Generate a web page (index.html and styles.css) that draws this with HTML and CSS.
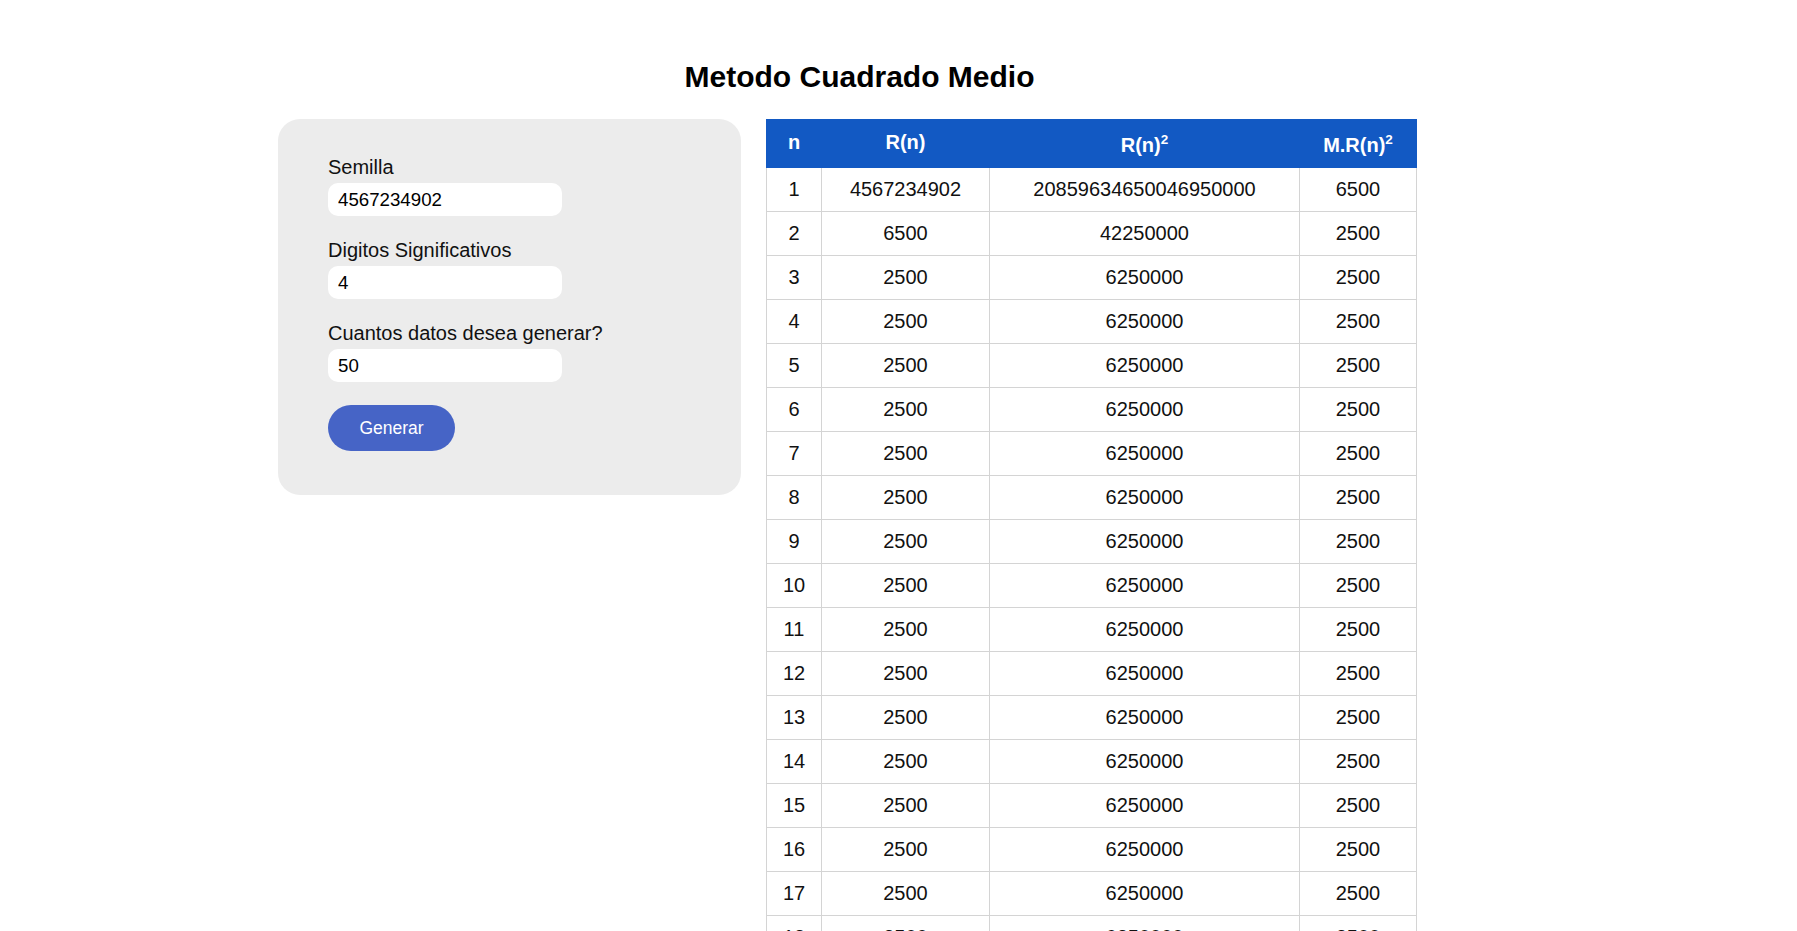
FILE: index.html
```html
<!DOCTYPE html>
<html lang="es">
<head>
<meta charset="utf-8">
<title>Metodo Cuadrado Medio</title>
<link rel="stylesheet" href="styles.css">
</head>
<body>
<div class="page">
  <h1 class="title">Metodo Cuadrado Medio</h1>
  <div class="layout">
    <form class="panel">
      <label class="label" for="semilla">Semilla</label>
      <input class="field" id="semilla" type="text" value="4567234902">
      <label class="label" for="digitos">Digitos Significativos</label>
      <input class="field" id="digitos" type="text" value="4">
      <label class="label" for="cuantos">Cuantos datos desea generar?</label>
      <input class="field" id="cuantos" type="text" value="50">
      <button class="btn" type="button">Generar</button>
    </form>
    <table class="results">
      <colgroup>
        <col class="c1"><col class="c2"><col class="c3"><col class="c4">
      </colgroup>
      <thead>
        <tr>
          <th class="plain">n</th>
          <th class="plain">R(n)</th>
          <th class="withsup">R(n)<sup class="sq">2</sup></th>
          <th class="withsup">M.R(n)<sup class="sq">2</sup></th>
        </tr>
      </thead>
      <tbody>
        <tr><td>1</td><td>4567234902</td><td>20859634650046950000</td><td>6500</td></tr>
        <tr><td>2</td><td>6500</td><td>42250000</td><td>2500</td></tr>
        <tr><td>3</td><td>2500</td><td>6250000</td><td>2500</td></tr>
        <tr><td>4</td><td>2500</td><td>6250000</td><td>2500</td></tr>
        <tr><td>5</td><td>2500</td><td>6250000</td><td>2500</td></tr>
        <tr><td>6</td><td>2500</td><td>6250000</td><td>2500</td></tr>
        <tr><td>7</td><td>2500</td><td>6250000</td><td>2500</td></tr>
        <tr><td>8</td><td>2500</td><td>6250000</td><td>2500</td></tr>
        <tr><td>9</td><td>2500</td><td>6250000</td><td>2500</td></tr>
        <tr><td>10</td><td>2500</td><td>6250000</td><td>2500</td></tr>
        <tr><td>11</td><td>2500</td><td>6250000</td><td>2500</td></tr>
        <tr><td>12</td><td>2500</td><td>6250000</td><td>2500</td></tr>
        <tr><td>13</td><td>2500</td><td>6250000</td><td>2500</td></tr>
        <tr><td>14</td><td>2500</td><td>6250000</td><td>2500</td></tr>
        <tr><td>15</td><td>2500</td><td>6250000</td><td>2500</td></tr>
        <tr><td>16</td><td>2500</td><td>6250000</td><td>2500</td></tr>
        <tr><td>17</td><td>2500</td><td>6250000</td><td>2500</td></tr>
        <tr><td>18</td><td>2500</td><td>6250000</td><td>2500</td></tr>
        <tr><td>19</td><td>2500</td><td>6250000</td><td>2500</td></tr>
        <tr><td>20</td><td>2500</td><td>6250000</td><td>2500</td></tr>
        <tr><td>21</td><td>2500</td><td>6250000</td><td>2500</td></tr>
        <tr><td>22</td><td>2500</td><td>6250000</td><td>2500</td></tr>
        <tr><td>23</td><td>2500</td><td>6250000</td><td>2500</td></tr>
        <tr><td>24</td><td>2500</td><td>6250000</td><td>2500</td></tr>
        <tr><td>25</td><td>2500</td><td>6250000</td><td>2500</td></tr>
        <tr><td>26</td><td>2500</td><td>6250000</td><td>2500</td></tr>
        <tr><td>27</td><td>2500</td><td>6250000</td><td>2500</td></tr>
        <tr><td>28</td><td>2500</td><td>6250000</td><td>2500</td></tr>
        <tr><td>29</td><td>2500</td><td>6250000</td><td>2500</td></tr>
        <tr><td>30</td><td>2500</td><td>6250000</td><td>2500</td></tr>
        <tr><td>31</td><td>2500</td><td>6250000</td><td>2500</td></tr>
        <tr><td>32</td><td>2500</td><td>6250000</td><td>2500</td></tr>
        <tr><td>33</td><td>2500</td><td>6250000</td><td>2500</td></tr>
        <tr><td>34</td><td>2500</td><td>6250000</td><td>2500</td></tr>
        <tr><td>35</td><td>2500</td><td>6250000</td><td>2500</td></tr>
        <tr><td>36</td><td>2500</td><td>6250000</td><td>2500</td></tr>
        <tr><td>37</td><td>2500</td><td>6250000</td><td>2500</td></tr>
        <tr><td>38</td><td>2500</td><td>6250000</td><td>2500</td></tr>
        <tr><td>39</td><td>2500</td><td>6250000</td><td>2500</td></tr>
        <tr><td>40</td><td>2500</td><td>6250000</td><td>2500</td></tr>
        <tr><td>41</td><td>2500</td><td>6250000</td><td>2500</td></tr>
        <tr><td>42</td><td>2500</td><td>6250000</td><td>2500</td></tr>
        <tr><td>43</td><td>2500</td><td>6250000</td><td>2500</td></tr>
        <tr><td>44</td><td>2500</td><td>6250000</td><td>2500</td></tr>
        <tr><td>45</td><td>2500</td><td>6250000</td><td>2500</td></tr>
        <tr><td>46</td><td>2500</td><td>6250000</td><td>2500</td></tr>
        <tr><td>47</td><td>2500</td><td>6250000</td><td>2500</td></tr>
        <tr><td>48</td><td>2500</td><td>6250000</td><td>2500</td></tr>
        <tr><td>49</td><td>2500</td><td>6250000</td><td>2500</td></tr>
        <tr><td>50</td><td>2500</td><td>6250000</td><td>2500</td></tr>
      </tbody>
    </table>
  </div>
</div>
</body>
</html>
```
FILE: styles.css
```css
* { box-sizing: border-box; }

html, body {
  margin: 0;
  padding: 0;
  background: #ffffff;
  font-family: "Liberation Sans", Arial, sans-serif;
  color: #000000;
}

.page {
  width: 1163px;
  margin-left: 278px;
  padding-bottom: 40px;
}

.title {
  margin: 60px 0 0;
  font-size: 30px;
  font-weight: bold;
  line-height: 34px;
  text-align: center;
}

.layout {
  display: flex;
  align-items: flex-start;
  gap: 25px;
  margin-top: 25px;
}

.panel {
  width: 463px;
  flex: none;
  background: #ececec;
  border-radius: 22px;
  padding: 37px 50px 44px;
  display: flex;
  flex-direction: column;
  align-items: flex-start;
  margin: 0;
}

.label {
  font-size: 20px;
  line-height: 23px;
  color: #111111;
}

.field {
  width: 234px;
  height: 33px;
  margin: 4px 0 23px;
  border: none;
  border-radius: 10px;
  background: #ffffff;
  padding: 0 10px;
  font-family: "Liberation Sans", Arial, sans-serif;
  font-size: 18.7px;
  color: #000000;
  outline: none;
}

.btn {
  margin-top: 0;
  width: 127px;
  height: 46px;
  border: none;
  border-radius: 23px;
  background: #4664c6;
  color: #ffffff;
  font-family: "Liberation Sans", Arial, sans-serif;
  font-size: 17.5px;
  padding: 0;
}

.results {
  width: 650px;
  flex: none;
  border-collapse: collapse;
  table-layout: fixed;
  font-size: 20px;
}

.c1 { width: 55px; }
.c2 { width: 168px; }
.c3 { width: 310px; }
.c4 { width: 117px; }

.results th {
  background: #1259c3;
  color: #ffffff;
  font-weight: bold;
  border: 1px solid #1259c3;
  height: 48px;
  padding: 0;
  line-height: 23px;
  text-align: center;
  vertical-align: top;
}

.results th.plain { padding-top: 11px; }
.results th.withsup { padding-top: 14px; }

.sq {
  font-size: 13.5px;
  line-height: 0;
  vertical-align: 8px;
}

.results td {
  border: 1px solid #d4d4d4;
  padding: 10px 0;
  line-height: 23px;
  text-align: center;
  color: #111111;
}
```
